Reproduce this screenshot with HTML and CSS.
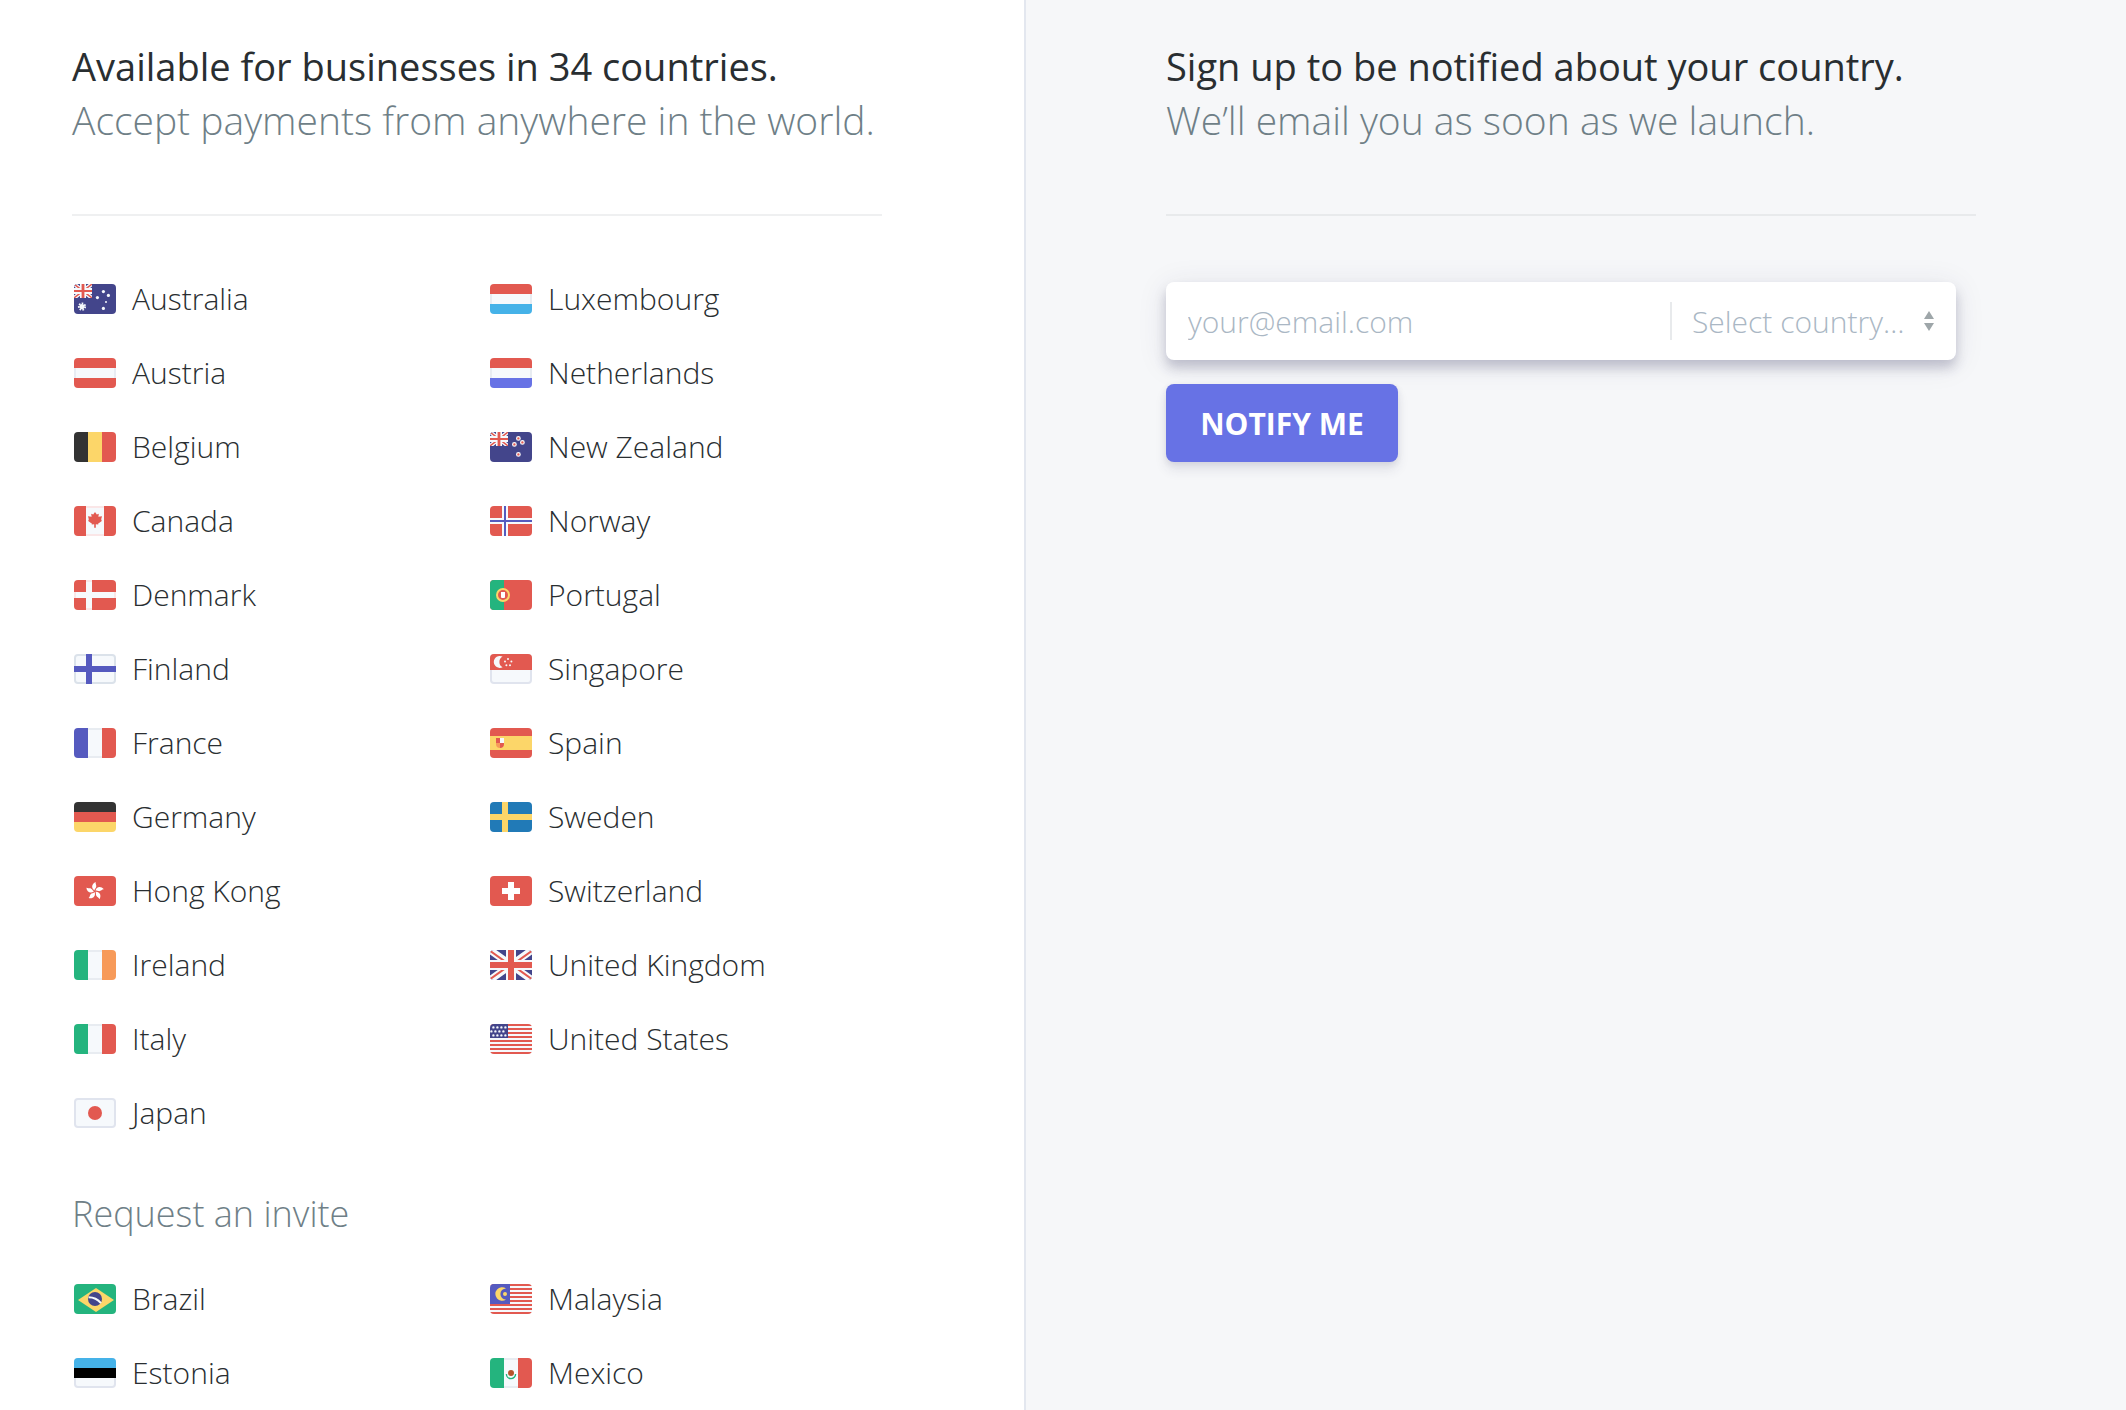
FILE: index.html
```html
<!DOCTYPE html>
<html lang="en">
<head>
<meta charset="utf-8">
<title>Countries</title>
<link rel="stylesheet" href="styles.css">
</head>
<body>
<svg class="defs" aria-hidden="true">
  <symbol id="canton" viewBox="0 0 9 7">
    <rect width="9" height="7" fill="#43458b"/>
    <path d="M0 0 9 7M9 0 0 7" stroke="#f6f9fc" stroke-width="2"/>
    <path d="M0 0 9 7M9 0 0 7" stroke="#e25950" stroke-width=".7"/>
    <path d="M3 0h3v7H3zM0 2h9v3H0z" fill="#f6f9fc"/>
    <path d="M3.8 0h1.4v7H3.8zM0 3h9v1H0z" fill="#e25950"/>
  </symbol>
</svg>
<main class="page">
  <section class="pane">
    <header class="intro">
      <h1 class="title">Available for businesses in 34 countries.</h1>
      <p class="lead">Accept payments from anywhere in the world.</p>
    </header>
    <ul class="countries countries-live">
      <li class="country"><svg class="flag" viewBox="0 0 21 15"><rect width="21" height="15" fill="#43458b"/><use href="#canton" width="9" height="7"/><circle cx="4" cy="11.300" r="1.300" fill="#f6f9fc"/><circle cx="4" cy="11.300" r="1.600" fill="none" stroke="#f6f9fc" stroke-width=".9" stroke-dasharray=".8 .636"/><g fill="#f6f9fc"><circle cx="14.700" cy="3.800" r=".8"/><circle cx="17.200" cy="5.700" r=".8"/><circle cx="11.700" cy="6.800" r=".8"/><circle cx="16" cy="9" r=".5"/><circle cx="14.700" cy="12.200" r=".8"/></g></svg>Australia</li>
      <li class="country"><svg class="flag" viewBox="0 0 21 15"><rect width="21" height="15" fill="#e25950"/><path fill="#e8ecf3" d="M0 5h21v5H0z"/><path fill="#f6f9fc" d="M1 5h19v5H1z"/></svg>Austria</li>
      <li class="country"><svg class="flag" viewBox="0 0 21 15"><path fill="#333" d="M0 0h7v15H0z"/><path fill="#fcd669" d="M7 0h7v15H7z"/><path fill="#e25950" d="M14 0h7v15h-7z"/></svg>Belgium</li>
      <li class="country"><svg class="flag" viewBox="0 0 21 15"><rect width="21" height="15" fill="#e25950"/><path fill="#fae6e7" d="M6 0h9v15H6z"/><path fill="#f6f9fc" d="M6 1h9v13H6z"/><path fill="#e25950" d="m10.500 3 .9 1.300 1-.4-.2 1.500 1.800-.3-.4 1.500.3.900-1.900 1.400.2.400-1.300-.2v1.800h-.8V9.100l-1.300.2.200-.4-1.900-1.400.3-.9L7 5.100l1.800.3-.2-1.500 1 .4z"/></svg>Canada</li>
      <li class="country"><svg class="flag" viewBox="0 0 21 15"><rect width="21" height="15" fill="#e25950"/><path fill="#fae6e7" d="M6 0h3v15H6zM0 6h21v3H0z"/><path fill="#f6f9fc" d="M6 1h3v13H6zM1 6h19v3H1z"/></svg>Denmark</li>
      <li class="country"><svg class="flag" viewBox="0 0 21 15"><rect width="21" height="15" fill="#dbe2ea"/><rect x="1" y="1" width="19" height="13" rx="1" fill="#f6f9fc"/><path fill="#555abf" d="M6 0h3v15H6zM0 6h21v3H0z"/></svg>Finland</li>
      <li class="country"><svg class="flag" viewBox="0 0 21 15"><path fill="#555abf" d="M0 0h7v15H0z"/><path fill="#e8ecf1" d="M7 0h7v15H7z"/><path fill="#f6f9fc" d="M7 1h7v13H7z"/><path fill="#e25950" d="M14 0h7v15h-7z"/></svg>France</li>
      <li class="country"><svg class="flag" viewBox="0 0 21 15"><path fill="#333" d="M0 0h21v5H0z"/><path fill="#e25950" d="M0 5h21v5H0z"/><path fill="#fcd669" d="M0 10h21v5H0z"/></svg>Germany</li>
      <li class="country"><svg class="flag" viewBox="0 0 21 15"><defs><path id="petal" d="M-.1-.4C-1.900-1.400-1.700-3.700.5-4.600.1-3.600 1.200-2.900.5-1.700.2-1.200-.1-1-.1-.4z"/></defs><rect width="21" height="15" fill="#e25950"/><g fill="#fff" transform="translate(10.400 7.600)"><use href="#petal"/><use href="#petal" transform="rotate(72)"/><use href="#petal" transform="rotate(144)"/><use href="#petal" transform="rotate(216)"/><use href="#petal" transform="rotate(288)"/></g></svg>Hong Kong</li>
      <li class="country"><svg class="flag" viewBox="0 0 21 15"><path fill="#24b47e" d="M0 0h7v15H0z"/><path fill="#e8ecf1" d="M7 0h7v15H7z"/><path fill="#f6f9fc" d="M7 1h7v13H7z"/><path fill="#f79a59" d="M14 0h7v15h-7z"/></svg>Ireland</li>
      <li class="country"><svg class="flag" viewBox="0 0 21 15"><path fill="#24b47e" d="M0 0h7v15H0z"/><path fill="#e8ecf1" d="M7 0h7v15H7z"/><path fill="#f6f9fc" d="M7 1h7v13H7z"/><path fill="#e25950" d="M14 0h7v15h-7z"/></svg>Italy</li>
      <li class="country"><svg class="flag" viewBox="0 0 21 15"><rect width="21" height="15" fill="#e0e4ee"/><rect x="1" y="1" width="19" height="13" rx="1" fill="#f6f9fc"/><circle cx="10.500" cy="7.500" r="3.500" fill="#e25950"/></svg>Japan</li>
      <li class="country"><svg class="flag" viewBox="0 0 21 15"><path fill="#e25950" d="M0 0h21v5H0z"/><path fill="#e8ecf1" d="M0 5h21v5H0z"/><path fill="#f6f9fc" d="M1 5h19v5H1z"/><path fill="#45b2e8" d="M0 10h21v5H0z"/></svg>Luxembourg</li>
      <li class="country"><svg class="flag" viewBox="0 0 21 15"><path fill="#e25950" d="M0 0h21v5H0z"/><path fill="#e8ecf1" d="M0 5h21v5H0z"/><path fill="#f6f9fc" d="M1 5h19v5H1z"/><path fill="#6772e5" d="M0 10h21v5H0z"/></svg>Netherlands</li>
      <li class="country"><svg class="flag" viewBox="0 0 21 15"><rect width="21" height="15" fill="#43458b"/><use href="#canton" width="9" height="7"/><g fill="#e25950" stroke="#f6f9fc" stroke-width=".6"><circle cx="14.200" cy="3.200" r=".9"/><circle cx="12.200" cy="6.200" r=".9"/><circle cx="16.200" cy="5.200" r=".9"/><circle cx="14.200" cy="11.200" r=".9"/></g></svg>New Zealand</li>
      <li class="country"><svg class="flag" viewBox="0 0 21 15"><rect width="21" height="15" fill="#e25950"/><path fill="#f6f9fc" d="M6 0h3v15H6zM0 6h21v3H0z"/><path fill="#555abf" d="M7 0h1v15H7zM0 7h21v1H0z"/></svg>Norway</li>
      <li class="country"><svg class="flag" viewBox="0 0 21 15"><rect width="21" height="15" fill="#e25950"/><path fill="#24b47e" d="M0 0h7v15H0z"/><circle cx="6.500" cy="7.500" r="3" fill="#e25950" stroke="#fcd669"/><path fill="#fff" d="M5.500 6h2v2.500q0 .5-.5.500H6q-.5 0-.5-.5z"/></svg>Portugal</li>
      <li class="country"><svg class="flag" viewBox="0 0 21 15"><rect width="21" height="15" fill="#e0e4ee"/><rect x="1" y="6" width="19" height="8" rx="1" fill="#f6f9fc"/><path fill="#e25950" d="M0 0h21v8H0z"/><path fill="#f6f9fc" d="M6.300 1.300a3 3 0 1 0 0 5.300 3 3 0 0 1 0-5.300z"/><g fill="#f6f9fc"><circle cx="9" cy="2.500" r=".5"/><circle cx="7.500" cy="3.800" r=".5"/><circle cx="10.700" cy="3.800" r=".5"/><circle cx="8.200" cy="5.600" r=".5"/><circle cx="10" cy="5.600" r=".5"/></g></svg>Singapore</li>
      <li class="country"><svg class="flag" viewBox="0 0 21 15"><rect width="21" height="15" fill="#e25950"/><path fill="#fcd669" d="M0 4h21v7H0z"/><path fill="#e25950" d="M3 5h2v2.500H3zM5 7.500h2V8q0 2-2 2z"/><path fill="#f6f9fc" d="M5 5h2v2.500H5z"/><path fill="#f79a59" d="M3 7.500h2V10Q3 10 3 8z"/></svg>Spain</li>
      <li class="country"><svg class="flag" viewBox="0 0 21 15"><rect width="21" height="15" fill="#217ab7"/><path fill="#fcd669" d="M6 0h3v15H6zM0 6h21v3H0z"/></svg>Sweden</li>
      <li class="country"><svg class="flag" viewBox="0 0 21 15"><rect width="21" height="15" fill="#e25950"/><path fill="#fff" d="M9 3h3v9H9zM6 6h9v3H6z"/></svg>Switzerland</li>
      <li class="country"><svg class="flag" viewBox="0 0 21 15"><rect width="21" height="15" fill="#43458b"/><path d="M0 0 21 15M21 0 0 15" stroke="#f6f9fc" stroke-width="3.600"/><path d="M0 .4 9 6.800M21 .4l-9 6.400M0 14.600l9-6.400M21 14.600l-9-6.400" stroke="#e25950" stroke-width="1"/><path fill="#f6f9fc" d="M8 0h5v15H8zM0 5h21v5H0z"/><path fill="#e25950" d="M9 0h3v15H9zM0 6h21v3H0z"/></svg>United Kingdom</li>
      <li class="country"><svg class="flag" viewBox="0 0 21 15"><rect width="21" height="15" fill="#f6f9fc"/><path d="M0 .5h21m0 2H0m0 2h21m0 2H0m0 2h21m0 2H0m0 2h21m0 2H0" stroke="#e25950"/><path fill="#43458b" d="M0 0h9v7H0z"/><path d="M1.700 1.700h6.500m-7.500 2h8M1.700 5.700h6.500" stroke="#f6f9fc" stroke-width="1.200" stroke-linecap="round" stroke-dasharray="0 2"/></svg>United States</li>
    </ul>
    <h2 class="subtitle">Request an invite</h2>
    <ul class="countries countries-invite">
      <li class="country"><svg class="flag" viewBox="0 0 21 15"><rect width="21" height="15" fill="#24b47e"/><path fill="#fcd669" d="m11 2 9 6-9 6-9-6z"/><circle cx="10.500" cy="7.500" r="3.500" fill="#43458b"/><path d="M7.300 6.600q3.800 0 6.200 3" fill="none" stroke="#f6f9fc"/></svg>Brazil</li>
      <li class="country"><svg class="flag" viewBox="0 0 21 15"><rect width="21" height="15" fill="#e0e4ee"/><rect x="1" y="8" width="19" height="6" rx="1" fill="#f6f9fc"/><path fill="#45b2e8" d="M0 0h21v5H0z"/><path d="M0 5h21v5H0z"/></svg>Estonia</li>
      <li class="country"><svg class="flag" viewBox="0 0 21 15"><rect width="21" height="15" fill="#f6f9fc"/><path d="M0 .5h21m0 2H0m0 2h21m0 2H0m0 2h21m0 2H0m0 2h21m0 2H0" stroke="#e25950"/><path fill="#555abf" d="M0 0h10v10H0z"/><path fill="#fcd669" d="M8 2.200a3.400 3.400 0 1 0 0 5.600 2.800 2.800 0 1 1 0-5.600z"/><circle cx="7.500" cy="5" r="1" fill="#fcd669"/></svg>Malaysia</li>
      <li class="country"><svg class="flag" viewBox="0 0 21 15"><path fill="#24b47e" d="M0 0h7v15H0z"/><path fill="#e8ecf1" d="M7 0h7v15H7z"/><path fill="#f6f9fc" d="M7 1h7v13H7z"/><path fill="#e25950" d="M14 0h7v15h-7z"/><circle cx="10.500" cy="7.500" r="1.500" fill="#b7532b"/><path d="M8.200 8a2.300 2.300 0 0 0 4.600 0" fill="none" stroke="#24b47e" stroke-width=".7"/></svg>Mexico</li>
    </ul>
  </section>
  <section class="pane pane-signup">
    <header class="intro">
      <h2 class="title">Sign up to be notified about your country.</h2>
      <p class="lead">We’ll email you as soon as we launch.</p>
    </header>
    <form class="signup">
      <div class="fields">
        <input class="email" type="email" placeholder="your@email.com" aria-label="Email address">
        <div class="picker">
          <select class="select" aria-label="Country"><option>Select country…</option></select>
          <svg class="arrows" viewBox="0 0 10 20" aria-hidden="true"><path fill="#9ea6a9" d="m5 0 5 8H0zM0 12h10l-5 8z"/></svg>
        </div>
      </div>
      <button class="notify" type="submit">NOTIFY ME</button>
    </form>
  </section>
</main>
</body>
</html>
```

FILE: styles.css
```css
* {
  box-sizing: border-box;
}

body {
  margin: 0;
  background: #fff;
  color: #292e31;
  font-family: "Open Sans", "Liberation Sans", sans-serif;
  font-size: 30px;
  font-weight: 300;
}

.defs {
  display: none;
}

.page {
  display: grid;
  grid-template-columns: 512fr 551fr;
  min-height: 100vh;
}

.pane {
  padding: 39px 142px 0 72px;
}

.pane-signup {
  padding: 39px 150px 0 140px;
  border-left: 2px solid #e3e7ef;
  background: #f6f7f9;
}

.intro {
  padding-bottom: 67px;
  border-bottom: 2px solid #eff0f1;
}

.pane-signup .intro {
  border-color: #e8eaec;
}

.title,
.lead,
.subtitle {
  margin: 0;
  font-size: 38px;
  line-height: 54px;
  white-space: nowrap;
}

.title {
  font-weight: 400;
}

.lead,
.subtitle {
  color: #6f7f87;
  font-weight: 300;
}

.lead {
  font-size: 39px;
}

.subtitle {
  margin: 37px 0 21px;
  font-size: 36px;
}

.countries {
  display: grid;
  grid-auto-flow: column;
  grid-auto-columns: 1fr;
  column-gap: 24px;
  margin: 0;
  padding: 0 0 0 2px;
  list-style: none;
}

.countries-live {
  grid-template-rows: repeat(12, 74px);
  margin-top: 46px;
}

.countries-invite {
  grid-template-rows: repeat(2, 74px);
}

.country {
  display: flex;
  align-items: center;
  gap: 16px;
  line-height: 40px;
  white-space: nowrap;
}

.flag {
  flex: none;
  width: 42px;
  height: 30px;
  border-radius: 4px;
}

.signup {
  margin: 66px 20px 0 0;
}

.fields {
  display: flex;
  align-items: center;
  height: 78px;
  padding-right: 22px;
  border-radius: 8px;
  background: #fff;
  box-shadow: 0 8px 12px rgba(50, 50, 93, 0.24), 0 4px 30px rgba(50, 50, 93, 0.1);
}

.email,
.select,
.notify {
  border: 0;
  background: none;
  font: inherit;
}

.email {
  flex: 1;
  min-width: 0;
  height: 78px;
  padding: 0 22px;
  color: #292e31;
}

.email::placeholder {
  color: #aab7c4;
  opacity: 1;
}

.picker {
  display: flex;
  align-items: center;
  justify-content: space-between;
  height: 38px;
  padding-left: 20px;
  border-left: 2px solid #e8eaec;
}

.select {
  width: 232px;
  padding: 0;
  appearance: none;
  color: #aab7c4;
}

.arrows {
  width: 10px;
  height: 20px;
}

.notify {
  min-width: 232px;
  height: 78px;
  margin-top: 24px;
  padding: 0 28px;
  border-radius: 8px;
  background: #6772e5;
  box-shadow: 0 8px 12px rgba(50, 50, 93, 0.1), 0 2px 6px rgba(50, 50, 93, 0.1);
  color: #fff;
  font-weight: 700;
}
```
